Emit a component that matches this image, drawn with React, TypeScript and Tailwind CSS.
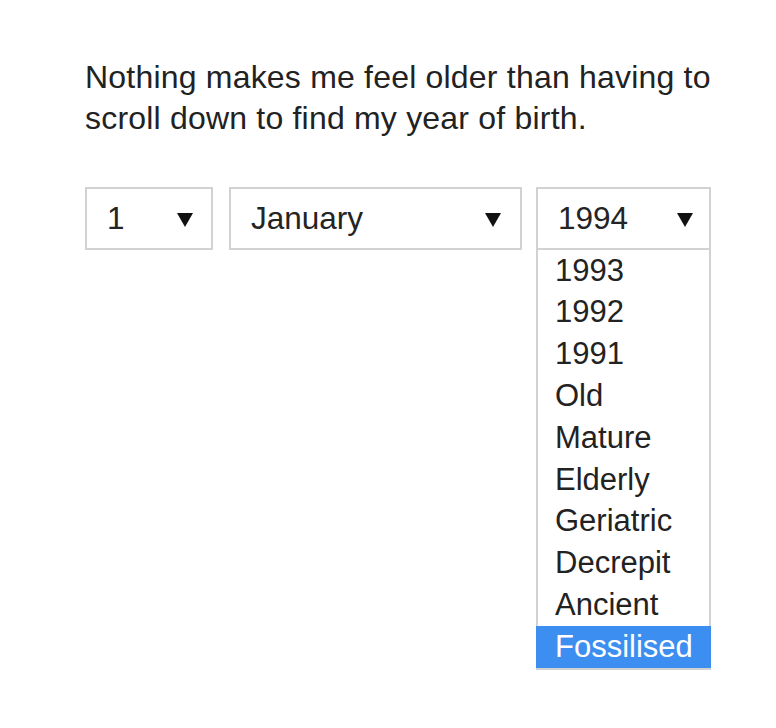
import React from "react";

const items = ["1993", "1992", "1991", "Old", "Mature", "Elderly", "Geriatric", "Decrepit", "Ancient", "Fossilised"];

function Arrow() {
  return (
    <svg width="16" height="14" viewBox="0 0 16 14" className="mt-[3px] shrink-0">
      <polygon points="0,0 16,0 8,14" fill="#111" />
    </svg>
  );
}

function Select({ value, width, pr }: { value: string; width: string; pr: string }) {
  return (
    <div className={`${width} ${pr} h-[63px] border-2 border-[#d2d2d2] flex items-center justify-between pl-[20px] bg-white`}>
      <span className="text-[31.5px] text-[#242424]">{value}</span>
      <Arrow />
    </div>
  );
}

export default function App() {
  return (
    <div className="w-[776px] h-[728px] bg-white overflow-hidden pl-[85px] pt-[57px]" style={{ fontFamily: '"Liberation Sans", Arial, sans-serif' }}>
      <p className="text-[32px] leading-[41px] text-[#222] tracking-[0.2px]">
        Nothing makes me feel older than having to
        <br />
        scroll down to find my year of birth.
      </p>
      <div className="flex items-start mt-[48px]">
        <Select value="1" width="w-[128px]" pr="pr-[18px]" />
        <div className="ml-[16px]">
          <Select value="January" width="w-[293px]" pr="pr-[19px]" />
        </div>
        <div className="flex flex-col w-[175px] ml-[14px]">
          <Select value="1994" width="w-[175px]" pr="pr-[16px]" />
          <div className="border-2 border-t-0 border-[#d2d2d2] bg-white flex flex-col">
            {items.map((it, i) => (
              <div
                key={it}
                className={`h-[41.8px] flex items-center text-[31px] ${
                  i === items.length - 1 ? "bg-[#3c8ef0] text-white -mx-[2px] pl-[19px]" : "text-[#222] pl-[17px]"
                }`}
              >
                {it}
              </div>
            ))}
          </div>
        </div>
      </div>
    </div>
  );
}
